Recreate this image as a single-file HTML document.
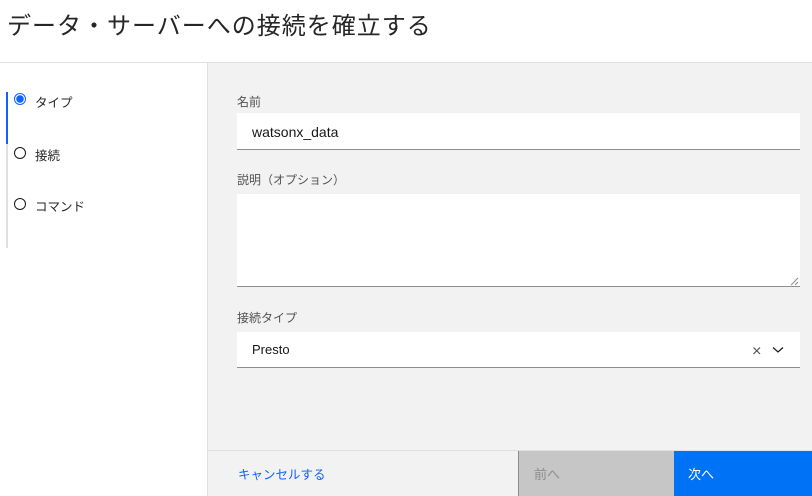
<!DOCTYPE html>
<html><head><meta charset="utf-8"><style>
*{margin:0;padding:0;box-sizing:border-box}
body{width:812px;height:496px;overflow:hidden;background:#fff;font-family:"Liberation Sans","Noto Sans CJK JP",sans-serif;color:#161616;position:relative}
.abs{position:absolute}
h1{position:absolute;left:7px;top:6px;font-size:24px;font-weight:400;letter-spacing:1px;white-space:nowrap;color:#262626}
.hdr{left:0;top:62px;width:812px;height:1px;background:#e0e0e0}
.right{left:207px;top:63px;width:605px;height:433px;background:#f2f2f2;border-left:1px solid #e0e0e0}
.lbl{font-size:12px;color:#525252}
.inp{background:#fff;border-bottom:1px solid #8d8d8d;left:237px;width:563px}
.step{font-size:12.5px;color:#262626;left:35px}
.rad{left:14px;width:12px;height:12px;border-radius:50%;border:1px solid #161616}
</style></head><body>
<h1>データ・サーバーへの接続を確立する</h1>
<div class="abs hdr"></div>
<div class="abs" style="left:6px;top:92px;width:2px;height:156px;background:#e0e0e0"></div>
<div class="abs" style="left:6px;top:92px;width:2px;height:52px;background:#0f62fe"></div>
<div class="abs rad" style="top:93px;border:1px solid #0f62fe;background:radial-gradient(circle,#0f62fe 0 3.5px,#fff 4px)"></div>
<div class="abs step" style="top:92px">タイプ</div>
<div class="abs rad" style="top:147px"></div>
<div class="abs step" style="top:145px">接続</div>
<div class="abs rad" style="top:198px"></div>
<div class="abs step" style="top:196px">コマンド</div>
<div class="abs right"></div>
<div class="abs lbl" style="left:237px;top:93px">名前</div>
<div class="abs inp" style="top:113px;height:37px"><span class="abs" style="left:15px;top:11px;font-size:14px">watsonx_data</span></div>
<div class="abs lbl" style="left:237px;top:171px">説明（オプション）</div>
<div class="abs inp" style="top:194px;height:93px"></div>
<svg class="abs" style="left:790px;top:277px" width="9" height="9"><path d="M1 8L8 1M5 8L8 5" stroke="#8d8d8d" stroke-width="1"/></svg>
<div class="abs lbl" style="left:237px;top:309px">接続タイプ</div>
<div class="abs inp" style="top:332px;height:36px"><span class="abs" style="left:15px;top:10px;font-size:13px">Presto</span></div>
<svg class="abs" style="left:752px;top:346px" width="10" height="10"><path d="M1.5 1.5L8 8M8 1.5L1.5 8" stroke="#525252" stroke-width="1.2"/></svg>
<svg class="abs" style="left:772px;top:346px" width="12" height="8"><path d="M1 1.5L6 6L11 1.5" stroke="#161616" stroke-width="1.2" fill="none"/></svg>
<div class="abs" style="left:208px;top:450px;width:604px;height:1px;background:#e0e0e0"></div>
<div class="abs" style="left:238px;top:464px;font-size:12.5px;color:#0f62fe">キャンセルする</div>
<div class="abs" style="left:518px;top:451px;width:156px;height:45px;background:#c6c6c6;border-left:1px solid #8d8d8d"><span class="abs" style="left:15px;top:13px;font-size:13px;color:#8d8d8d">前へ</span></div>
<div class="abs" style="left:674px;top:451px;width:138px;height:45px;background:#0072f5"><span class="abs" style="left:14px;top:13px;font-size:13px;color:#fff">次へ</span></div>
</body></html>
